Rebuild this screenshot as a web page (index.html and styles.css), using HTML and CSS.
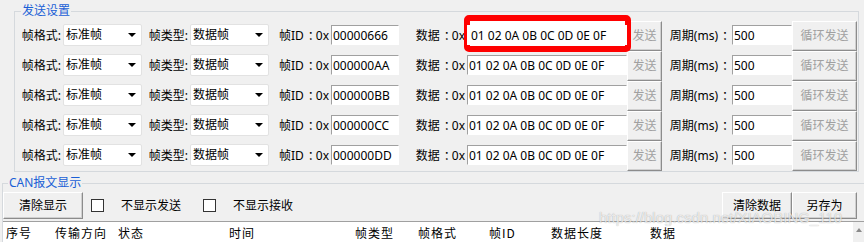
FILE: index.html
```html
<!DOCTYPE html>
<html lang="zh-CN">
<head>
    <meta charset="UTF-8">
    <title>CAN 发送设置</title>
    <link rel="stylesheet" href="styles.css">
</head>
<body>
    <!-- 发送设置 -->
    <div class="group send-group">
        <span class="group-title">发送设置</span>

        <div class="send-row">
            <span class="lbl">帧格式:</span>
            <div class="combo"><span>标准帧</span><i class="arrow"></i></div>
            <span class="lbl">帧类型:</span>
            <div class="combo"><span>数据帧</span><i class="arrow"></i></div>
            <span class="lbl">帧ID<span class="colon">：</span>0x</span>
            <div class="edit">00000666</div>
            <span class="lbl">数据<span class="colon">：</span>0x</span>
            <div class="data-cell">
                <div class="mark"></div>
                <div class="edit edit-marked">01 02 0A 0B 0C 0D 0E 0F</div>
            </div>
            <button class="btn" disabled>发送</button>
            <span class="lbl">周期(ms)<span class="colon">：</span></span>
            <div class="edit">500</div>
            <button class="btn" disabled>循环发送</button>
        </div>

        <div class="send-row">
            <span class="lbl">帧格式:</span>
            <div class="combo"><span>标准帧</span><i class="arrow"></i></div>
            <span class="lbl">帧类型:</span>
            <div class="combo"><span>数据帧</span><i class="arrow"></i></div>
            <span class="lbl">帧ID<span class="colon">：</span>0x</span>
            <div class="edit">000000AA</div>
            <span class="lbl">数据<span class="colon">：</span>0x</span>
            <div class="data-cell"><div class="edit">01 02 0A 0B 0C 0D 0E 0F</div></div>
            <button class="btn" disabled>发送</button>
            <span class="lbl">周期(ms)<span class="colon">：</span></span>
            <div class="edit">500</div>
            <button class="btn" disabled>循环发送</button>
        </div>

        <div class="send-row">
            <span class="lbl">帧格式:</span>
            <div class="combo"><span>标准帧</span><i class="arrow"></i></div>
            <span class="lbl">帧类型:</span>
            <div class="combo"><span>数据帧</span><i class="arrow"></i></div>
            <span class="lbl">帧ID<span class="colon">：</span>0x</span>
            <div class="edit">000000BB</div>
            <span class="lbl">数据<span class="colon">：</span>0x</span>
            <div class="data-cell"><div class="edit">01 02 0A 0B 0C 0D 0E 0F</div></div>
            <button class="btn" disabled>发送</button>
            <span class="lbl">周期(ms)<span class="colon">：</span></span>
            <div class="edit">500</div>
            <button class="btn" disabled>循环发送</button>
        </div>

        <div class="send-row">
            <span class="lbl">帧格式:</span>
            <div class="combo"><span>标准帧</span><i class="arrow"></i></div>
            <span class="lbl">帧类型:</span>
            <div class="combo"><span>数据帧</span><i class="arrow"></i></div>
            <span class="lbl">帧ID<span class="colon">：</span>0x</span>
            <div class="edit">000000CC</div>
            <span class="lbl">数据<span class="colon">：</span>0x</span>
            <div class="data-cell"><div class="edit">01 02 0A 0B 0C 0D 0E 0F</div></div>
            <button class="btn" disabled>发送</button>
            <span class="lbl">周期(ms)<span class="colon">：</span></span>
            <div class="edit">500</div>
            <button class="btn" disabled>循环发送</button>
        </div>

        <div class="send-row">
            <span class="lbl">帧格式:</span>
            <div class="combo"><span>标准帧</span><i class="arrow"></i></div>
            <span class="lbl">帧类型:</span>
            <div class="combo"><span>数据帧</span><i class="arrow"></i></div>
            <span class="lbl">帧ID<span class="colon">：</span>0x</span>
            <div class="edit">000000DD</div>
            <span class="lbl">数据<span class="colon">：</span>0x</span>
            <div class="data-cell"><div class="edit">01 02 0A 0B 0C 0D 0E 0F</div></div>
            <button class="btn" disabled>发送</button>
            <span class="lbl">周期(ms)<span class="colon">：</span></span>
            <div class="edit">500</div>
            <button class="btn" disabled>循环发送</button>
        </div>
    </div>

    <!-- CAN报文显示 -->
    <div class="group can-group">
        <span class="group-title">CAN报文显示</span>

        <div class="toolbar">
            <button class="btn btn-clear">清除显示</button>
            <label class="check"><span class="box"></span>不显示发送</label>
            <label class="check"><span class="box"></span>不显示接收</label>
            <button class="btn btn-data">清除数据</button>
            <button class="btn btn-save">另存为</button>
        </div>

        <div class="table">
            <div class="thead">
                <span class="col col-no">序号</span>
                <span class="col col-dir">传输方向</span>
                <span class="col col-state">状态</span>
                <span class="col col-time">时间</span>
                <span class="col col-type">帧类型</span>
                <span class="col col-fmt">帧格式</span>
                <span class="col col-id">帧ID</span>
                <span class="col col-len">数据长度</span>
                <span class="col">数据</span>
            </div>
            <div class="scrollbar"><i class="up"></i></div>
        </div>

        <div class="watermark">https://blog.csdn.net/XIAOBING_110</div>
    </div>
</body>
</html>
```

FILE: styles.css
```css
/* Global */
body {
    margin: 0;
    width: 864px;
    height: 242px;
    overflow: hidden;
    background: #f0f0f0;
    color: #000;
    font-family: "Noto Sans", "Noto Sans CJK SC", sans-serif;
    font-size: 12px;
    line-height: 16px;
}

/* Group boxes */
.group {
    position: relative;
    border: 1px solid #d5d9dd;
}

.group-title {
    position: absolute;
    top: -9px;
    background: #f0f0f0;
    color: #1a5fd6;
    padding: 0 1px;
    line-height: 16px;
}

.send-group {
    margin: 11px 5px 0 14px;
    padding: 9px 0 0 0;
}

.send-group .group-title {
    left: 6px;
}

.can-group {
    margin: 11px 0 0 2px;
    border-right: none;
    border-bottom: none;
    padding-top: 8px;
}

.can-group .group-title {
    left: 5px;
}

/* Send rows */
.send-row {
    display: grid;
    grid-template-columns: 48px 79px 48px 79px 62px 68px 68px 160px 35px 70px 60px 65px;
    height: 30px;
    align-items: start;
}

.lbl {
    text-align: right;
    padding-right: 2px;
    line-height: 29px;
    white-space: nowrap;
}

/* full-width colon, centred in its cell like the Windows UI font */
.colon {
    padding-left: 4px;
    letter-spacing: -4px;
}

.combo {
    margin-top: 3px;
    height: 22px;
    box-sizing: border-box;
    background: #fff;
    border: 1px solid #e2e2e2;
    border-radius: 2px;
    display: flex;
    align-items: center;
    justify-content: space-between;
    padding: 0 4px 0 2px;
}

.arrow {
    width: 0;
    height: 0;
    border-left: 4px solid transparent;
    border-right: 4px solid transparent;
    border-top: 4px solid #000;
    margin-right: 1px;
}

.edit {
    margin-top: 4px;
    height: 20px;
    box-sizing: border-box;
    background: #fff;
    border: 1px solid;
    border-color: #a0a0a0 #fff #fff #a0a0a0;
    padding: 1px 1px 0;
    line-height: 17px;
    white-space: nowrap;
    overflow: hidden;
}

/* Data cell with the red marker */
.data-cell {
    position: relative;
}

.data-cell .edit {
    position: relative;
}

.edit-marked {
    border-color: #fff;
    padding-left: 3px;
}

.mark {
    position: absolute;
    left: -3px;
    right: -4px;
    top: -6px;
    height: 37px;
    box-sizing: border-box;
    border: 6px solid #f00;
    border-radius: 5px;
    background: #fff;
}

/* Buttons */
.btn {
    height: 30px;
    margin: 0;
    padding: 0;
    font: inherit;
    color: #000;
    background: #f0f0f0;
    border: 1px solid;
    border-color: #fff #8c8c8c #8c8c8c #fff;
    box-shadow: inset -1px -1px 0 #d0d0d0;
}

.btn:disabled {
    color: #a0a0a0;
}

/* CAN display toolbar */
.toolbar {
    display: flex;
    align-items: center;
    height: 27px;
    padding-right: 7px;
}

.toolbar .btn {
    height: 27px;
}

.btn-clear {
    width: 80px;
}

.btn-data {
    width: 70px;
    margin-left: auto !important;
}

.btn-save {
    width: 65px;
}

.check {
    display: flex;
    align-items: center;
}

.check .box {
    width: 13px;
    height: 13px;
    box-sizing: border-box;
    border: 1px solid #333;
    background: #fff;
    margin-right: 17px;
}

.check:first-of-type {
    margin-left: 8px;
}

.check + .check {
    margin-left: 22px;
}

/* Table */
.table {
    display: flex;
    margin-top: 2px;
    height: 30px;
    border-top: 1px solid #a0a0a0;
}

.thead {
    flex: 1;
    display: flex;
    background: #fff;
    padding: 3px 0 0 3px;
    font-family: "Noto Sans CJK SC", sans-serif;
    white-space: nowrap;
}

.col {
    flex: none;
    letter-spacing: 1px;
}

.col-no { width: 49px; }
.col-dir { width: 63px; }
.col-state { width: 111px; }
.col-time { width: 126px; }
.col-type { width: 63px; }
.col-fmt { width: 71px; }
.col-id { width: 62px; }
.col-len { width: 99px; }

.scrollbar {
    width: 11px;
    background: #f0f0f0;
    display: flex;
    justify-content: center;
    padding-top: 6px;
}

.up {
    width: 0;
    height: 0;
    border-left: 3px solid transparent;
    border-right: 3px solid transparent;
    border-bottom: 4px solid #8a8a8a;
}

/* Watermark over the table */
.watermark {
    position: absolute;
    left: 596px;
    top: 25px;
    font-family: "Liberation Sans", sans-serif;
    font-size: 15px;
    line-height: 18px;
    color: rgba(255, 255, 255, 0.75);
    text-shadow: 0 0 1px rgba(0, 0, 0, 0.35);
    white-space: nowrap;
}
```
